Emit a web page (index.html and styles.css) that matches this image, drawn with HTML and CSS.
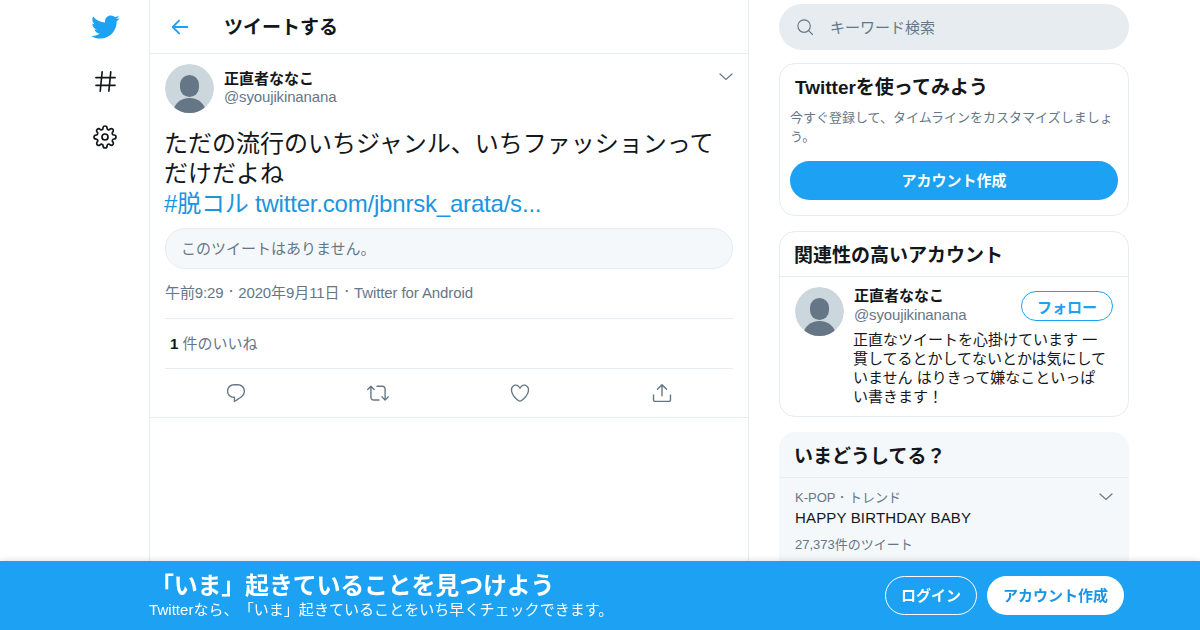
FILE: index.html
```html
<!DOCTYPE html>
<html lang="ja">
<head>
<meta charset="utf-8">
<title>ツイートする</title>
<link rel="stylesheet" href="styles.css">
</head>
<body>
<div class="page">
  <nav class="nav">
    <svg class="nav-bird" viewBox="0 0 24 24"><path d="M23.643 4.937c-.835.37-1.732.62-2.675.733.962-.576 1.7-1.49 2.048-2.578-.9.534-1.897.922-2.958 1.13-.85-.904-2.06-1.47-3.4-1.47-2.572 0-4.658 2.086-4.658 4.66 0 .364.042.718.12 1.06-3.873-.195-7.304-2.05-9.602-4.868-.4.69-.63 1.49-.63 2.342 0 1.616.823 3.043 2.072 3.878-.764-.025-1.482-.234-2.11-.583v.06c0 2.257 1.605 4.14 3.737 4.568-.392.106-.803.162-1.227.162-.3 0-.593-.028-.877-.082.593 1.85 2.313 3.198 4.352 3.234-1.595 1.25-3.604 1.995-5.786 1.995-.376 0-.747-.022-1.112-.065 2.062 1.323 4.51 2.093 7.14 2.093 8.57 0 13.255-7.098 13.255-13.254 0-.2-.005-.402-.014-.602.91-.658 1.7-1.477 2.323-2.41z"/></svg>
    <svg class="nav-hash" viewBox="0 0 24 24"><path d="M8.5 2 6.5 22M17.5 2 15.5 22M2 8h20M2 16h20" fill="none" stroke="#14171a" stroke-width="1.7" stroke-linecap="round"/></svg>
    <svg class="nav-gear" viewBox="0 0 24 24"><circle cx="12" cy="12" r="3" fill="none" stroke="#14171a" stroke-width="1.7"/><path fill="none" stroke="#14171a" stroke-width="1.7" d="M19.4 15a1.65 1.65 0 0 0 .33 1.82l.06.06a2 2 0 0 1 0 2.83 2 2 0 0 1-2.83 0l-.06-.06a1.65 1.65 0 0 0-1.82-.33 1.65 1.65 0 0 0-1 1.51V21a2 2 0 0 1-2 2 2 2 0 0 1-2-2v-.09A1.65 1.65 0 0 0 9 19.4a1.65 1.65 0 0 0-1.82.33l-.06.06a2 2 0 0 1-2.83 0 2 2 0 0 1 0-2.83l.06-.06a1.65 1.65 0 0 0 .33-1.82 1.65 1.65 0 0 0-1.51-1H3a2 2 0 0 1-2-2 2 2 0 0 1 2-2h.09A1.65 1.65 0 0 0 4.6 9a1.65 1.65 0 0 0-.33-1.82l-.06-.06a2 2 0 0 1 0-2.83 2 2 0 0 1 2.83 0l.06.06a1.65 1.65 0 0 0 1.82.33H9a1.65 1.65 0 0 0 1-1.51V3a2 2 0 0 1 2-2 2 2 0 0 1 2 2v.09a1.65 1.65 0 0 0 1 1.51 1.65 1.65 0 0 0 1.82-.33l.06-.06a2 2 0 0 1 2.83 0 2 2 0 0 1 0 2.83l-.06.06a1.65 1.65 0 0 0-.33 1.82V9a1.65 1.65 0 0 0 1.51 1H21a2 2 0 0 1 2 2 2 2 0 0 1-2 2h-.09a1.65 1.65 0 0 0-1.51 1z"/></svg>
  </nav>

  <main class="main">
    <header class="main-head">
      <svg class="back" viewBox="0 0 24 24"><path d="M20 12H4.5M11 5l-7 7 7 7" fill="none" stroke="#1da1f2" stroke-width="2" stroke-linecap="round" stroke-linejoin="round"/></svg>
      <h1 class="main-title">ツイートする</h1>
    </header>
    <article class="tweet">
      <div class="author">
        <svg class="avatar" viewBox="0 0 49 49"><circle cx="24.5" cy="24.5" r="24.5" fill="#ccd6dd"/><rect x="15" y="11" width="19" height="22" rx="9.5" fill="#657786"/><ellipse cx="24.5" cy="48" rx="16" ry="14" fill="#657786"/></svg>
        <div class="author-names">
          <div class="name">正直者ななこ</div>
          <div class="handle">@syoujikinanana</div>
        </div>
        <svg class="chev chev-tweet" viewBox="0 0 14 8"><path d="M1 1l6 5.5L13 1" fill="none" stroke="#657786" stroke-width="1.2" stroke-linecap="round"/></svg>
      </div>
      <p class="tweet-text">ただの流行のいちジャンル、いちファッションって<br>だけだよね<br><span class="link">#脱コル twitter.com/jbnrsk_arata/s...</span></p>
      <div class="quote">このツイートはありません。</div>
      <div class="meta">午前9:29 <span class="dot">･</span> 2020年9月11日 <span class="dot">･</span> Twitter for Android</div>
      <div class="stats"><b class="count">1</b> 件のいいね</div>
      <div class="actions">
        <svg class="act" viewBox="0 0 24 24"><path d="M14.046 2.242l-4.148-.01h-.002c-4.374 0-7.8 3.427-7.8 7.802 0 4.098 3.186 7.206 7.465 7.37v3.828c0 .108.044.286.12.403.142.225.384.347.632.347.138 0 .277-.038.402-.118.264-.168 6.473-4.14 8.088-5.506 1.902-1.61 3.04-3.97 3.043-6.312v-.017c-.006-4.367-3.43-7.787-7.8-7.788zm3.787 12.972c-1.134.96-4.862 3.405-6.772 4.643V16.67c0-.414-.335-.75-.75-.75h-.396c-3.66 0-6.318-2.476-6.318-5.886 0-3.534 2.768-6.302 6.3-6.302l4.147.01h.002c3.532 0 6.3 2.766 6.302 6.296-.003 1.91-.942 3.844-2.514 5.176z"/></svg>
        <svg class="act" viewBox="0 0 24 24"><path d="M23.77 15.67c-.292-.293-.767-.293-1.06 0l-2.22 2.22V7.65c0-2.068-1.683-3.75-3.75-3.75h-5.85c-.414 0-.75.336-.75.75s.336.75.75.75h5.85c1.24 0 2.25 1.01 2.25 2.25v10.24l-2.22-2.22c-.293-.293-.768-.293-1.06 0s-.294.768 0 1.06l3.5 3.5c.145.147.337.22.53.22s.383-.072.53-.22l3.5-3.5c.294-.292.294-.767 0-1.06zm-10.66 3.28H7.26c-1.24 0-2.25-1.01-2.25-2.25V6.46l2.22 2.22c.148.147.34.22.532.22s.384-.073.53-.22c.293-.293.293-.768 0-1.06l-3.5-3.5c-.293-.294-.768-.294-1.06 0l-3.5 3.5c-.294.292-.294.767 0 1.06s.767.293 1.06 0l2.22-2.22V16.7c0 2.068 1.683 3.75 3.75 3.75h5.85c.414 0 .75-.336.75-.75s-.337-.75-.75-.75z"/></svg>
        <svg class="act" viewBox="0 0 24 24"><path d="M12 21.638h-.014C9.403 21.59 1.95 14.856 1.95 8.478c0-3.064 2.525-5.754 5.403-5.754 2.29 0 3.83 1.58 4.646 2.73.814-1.148 2.354-2.73 4.645-2.73 2.88 0 5.404 2.69 5.404 5.755 0 6.376-7.454 13.11-10.037 13.157H12zM7.354 4.225c-2.08 0-3.903 1.988-3.903 4.255 0 5.74 7.034 11.596 8.55 11.658 1.518-.062 8.55-5.917 8.55-11.658 0-2.267-1.823-4.255-3.903-4.255-2.528 0-3.94 2.936-3.952 2.965-.23.562-1.156.562-1.387 0-.014-.03-1.425-2.965-3.954-2.965z"/></svg>
        <svg class="act" viewBox="0 0 24 24"><path d="M17.53 7.47l-5-5c-.293-.293-.768-.293-1.06 0l-5 5c-.294.293-.294.768 0 1.06s.767.294 1.06 0l3.72-3.72V15c0 .414.336.75.75.75s.75-.336.75-.75V4.81l3.72 3.72c.146.147.338.22.53.22s.384-.072.53-.22c.293-.293.293-.767 0-1.06z"/><path d="M19.708 21.944H4.292C3.028 21.944 2 20.916 2 19.652V14c0-.414.336-.75.75-.75s.75.336.75.75v5.652c0 .437.355.792.792.792h15.416c.437 0 .792-.355.792-.792V14c0-.414.336-.75.75-.75s.75.336.75.75v5.652c0 1.264-1.028 2.292-2.292 2.292z"/></svg>
      </div>
    </article>
  </main>

  <aside class="side">
    <div class="search">
      <svg class="search-icon" viewBox="0 0 24 24"><circle cx="10.8" cy="10.8" r="8.3" fill="none" stroke="#657786" stroke-width="1.5"/><path d="M16.8 16.8 22 22" stroke="#657786" stroke-width="1.5" stroke-linecap="round"/></svg>
      <span class="search-text">キーワード検索</span>
    </div>
    <section class="card card-signup">
      <h2 class="signup-title">Twitterを使ってみよう</h2>
      <p class="signup-desc">今すぐ登録して、タイムラインをカスタマイズしましょう。</p>
      <div class="btn-primary">アカウント作成</div>
    </section>
    <section class="card">
      <h2 class="card-title">関連性の高いアカウント</h2>
      <div class="person">
        <svg class="avatar" viewBox="0 0 49 49"><circle cx="24.5" cy="24.5" r="24.5" fill="#ccd6dd"/><rect x="15" y="11" width="19" height="22" rx="9.5" fill="#657786"/><ellipse cx="24.5" cy="48" rx="16" ry="14" fill="#657786"/></svg>
        <div class="person-body">
          <div class="person-top">
            <div class="person-names">
              <div class="person-name">正直者ななこ</div>
              <div class="handle">@syoujikinanana</div>
            </div>
            <div class="btn-follow">フォロー</div>
          </div>
          <p class="bio">正直なツイートを心掛けています 一貫してるとかしてないとかは気にしていません はりきって嫌なこといっぱい書きます！</p>
        </div>
      </div>
    </section>
    <section class="card card-trend">
      <h2 class="card-title">いまどうしてる？</h2>
      <div class="trend">
        <div class="trend-cat"><span>K-POP ･ トレンド</span><svg class="chev chev-trend" viewBox="0 0 14 8"><path d="M1 1l6 5.5L13 1" fill="none" stroke="#657786" stroke-width="1.2" stroke-linecap="round"/></svg></div>
        <div class="trend-name">HAPPY BIRTHDAY BABY</div>
        <div class="trend-count">27,373件のツイート</div>
      </div>
    </section>
  </aside>
</div>

<div class="banner">
  <div class="banner-copy">
    <div class="banner-title">「いま」起きていることを見つけよう</div>
    <div class="banner-sub">Twitterなら、「いま」起きていることをいち早くチェックできます。</div>
  </div>
  <div class="banner-btns">
    <div class="btn-login">ログイン</div>
    <div class="btn-signup">アカウント作成</div>
  </div>
</div>
</body>
</html>
```

FILE: styles.css
```css
* { box-sizing: border-box; }
html, body { margin: 0; height: 630px; overflow: hidden; background: #fff; }
body { font-family: "Liberation Sans", "Noto Sans CJK JP", sans-serif; color: #14171a; font-size: 15px; text-spacing-trim: space-all; }
h1, h2, p { margin: 0; }

.page { display: flex; width: 1080px; margin-left: 60px; height: 630px; align-items: flex-start; }

.nav { width: 89px; flex: none; display: flex; flex-direction: column; align-items: center; padding: 12px 0 0 1px; }
.nav-bird { width: 30px; height: 30px; fill: #1da1f2; }
.nav-hash { width: 23px; height: 23px; margin-top: 28px; }
.nav-gear { width: 24px; height: 24px; margin-top: 32px; }

.main { width: 600px; flex: none; height: 630px; border-left: 1px solid #e6ecf0; border-right: 1px solid #e6ecf0; }
.main-head { height: 54px; border-bottom: 1px solid #e6ecf0; display: flex; align-items: center; padding-left: 19px; }
.back { width: 22px; height: 22px; margin-right: 33px; }
.main-title { font-size: 19px; font-weight: 700; line-height: 26px; margin-top: 2px; }

.tweet { padding: 10px 15px 0; border-bottom: 1px solid #e6ecf0; }
.author { display: flex; align-items: flex-start; }
.avatar { width: 49px; height: 49px; flex: none; border-radius: 50%; }
.author-names { margin-left: 10px; padding-top: 5px; line-height: 19px; }
.name { font-weight: 700; font-size: 15px; margin-bottom: -1px; }
.handle { color: #657786; font-size: 15px; letter-spacing: -0.14px; }
.chev { width: 14px; height: 8px; flex: none; }
.chev-tweet { margin-left: auto; margin-top: 9px; }
.chev-trend { margin-top: -2px; }

.tweet-text { font-size: 24px; line-height: 30px; margin: 16px 0 0 -1px; }
.link { color: #1b95e0; letter-spacing: -0.2px; }
.quote { height: 41px; margin-top: 9px; padding: 0 0 3px 15px; border: 1px solid #e6ecf0; border-radius: 20px; background: #f5f8fa; color: #657786; display: flex; align-items: center; }
.meta { color: #657786; height: 50px; line-height: 48px; border-bottom: 1px solid #e6ecf0; letter-spacing: -0.1px; }
.dot { font-size: 13px; position: relative; top: -2px; }
.stats { height: 50px; line-height: 50px; color: #657786; padding-left: 5px; border-bottom: 1px solid #e6ecf0; }
.count { color: #14171a; }
.actions { height: 48px; display: flex; align-items: center; justify-content: space-between; padding: 0 60px; }
.act { width: 22px; height: 22px; fill: #657786; }

.side { width: 350px; flex: none; margin-left: 30px; padding-top: 4px; display: flex; flex-direction: column; }
.search { height: 46px; border-radius: 23px; background: #e6ecf0; display: flex; align-items: center; padding-left: 17px; margin-bottom: 13px; }
.search-icon { width: 18px; height: 18px; margin-right: 16px; }
.search-text { color: #657786; font-size: 15px; margin-top: -2px; }
.card { border: 1px solid #e6ecf0; border-radius: 16px; margin-bottom: 15px; }
.card-signup { height: 153px; padding: 11px 10px 0; }
.signup-title { font-size: 19px; font-weight: 700; line-height: 26px; padding-left: 5px; }
.signup-desc { font-size: 13px; line-height: 19px; color: #657786; margin-top: 7px; }
.btn-primary { height: 39px; margin-top: 15px; padding-bottom: 2px; border-radius: 20px; background: #1da1f2; color: #fff; font-weight: 700; display: flex; align-items: center; justify-content: center; }
.card-title { font-size: 19px; font-weight: 700; line-height: 47px; height: 45px; padding-left: 14px; border-bottom: 1px solid #e6ecf0; }
.person { display: flex; padding: 10px 15px 0; height: 139px; }
.person-body { flex: 1; min-width: 0; margin-left: 10px; }
.person-top { display: flex; justify-content: space-between; }
.person-names { line-height: 19px; margin-top: -1px; }
.person-name { font-weight: 700; }
.btn-follow { width: 92px; height: 30px; margin-top: 4px; border: 1px solid #1da1f2; border-radius: 15px; color: #1da1f2; font-weight: 700; display: flex; align-items: center; justify-content: center; }
.bio { line-height: 19px; font-size: 15px; color: #14171a; margin: 6px 0 0 -1px; padding-right: 4px; }
.card-trend { background: #f5f8fa; border-color: #f5f8fa; height: 200px; margin-bottom: 0; }
.trend { padding: 11px 15px 0; }
.trend-cat { display: flex; justify-content: space-between; align-items: center; font-size: 13px; color: #657786; line-height: 18px; }
.trend-name { font-size: 15px; line-height: 20px; margin-top: 1px; letter-spacing: 0.16px; }
.trend-count { font-size: 13px; color: #657786; margin-top: 8px; line-height: 18px; }

.banner { position: fixed; left: 0; right: 0; bottom: 0; height: 69px; background: #1da1f2; color: #fff; display: flex; justify-content: space-between; align-items: center; padding: 0 76px 0 149px; box-shadow: 0 -1px 6px rgba(0, 0, 0, .12); }
.banner-title { font-size: 24px; font-weight: 700; line-height: 28px; letter-spacing: -0.22px; margin: 2px 0 0 1px; }
.banner-sub { font-size: 15px; line-height: 20px; margin-bottom: 1px; letter-spacing: 0.05px; }
.banner-btns { display: flex; gap: 10px; }
.btn-login, .btn-signup { height: 39px; padding-bottom: 2px; border-radius: 20px; font-weight: 700; font-size: 15px; display: flex; align-items: center; justify-content: center; }
.btn-login { width: 92px; border: 1px solid #fff; color: #fff; }
.btn-signup { width: 137px; background: #fff; color: #1b95e0; }
```
